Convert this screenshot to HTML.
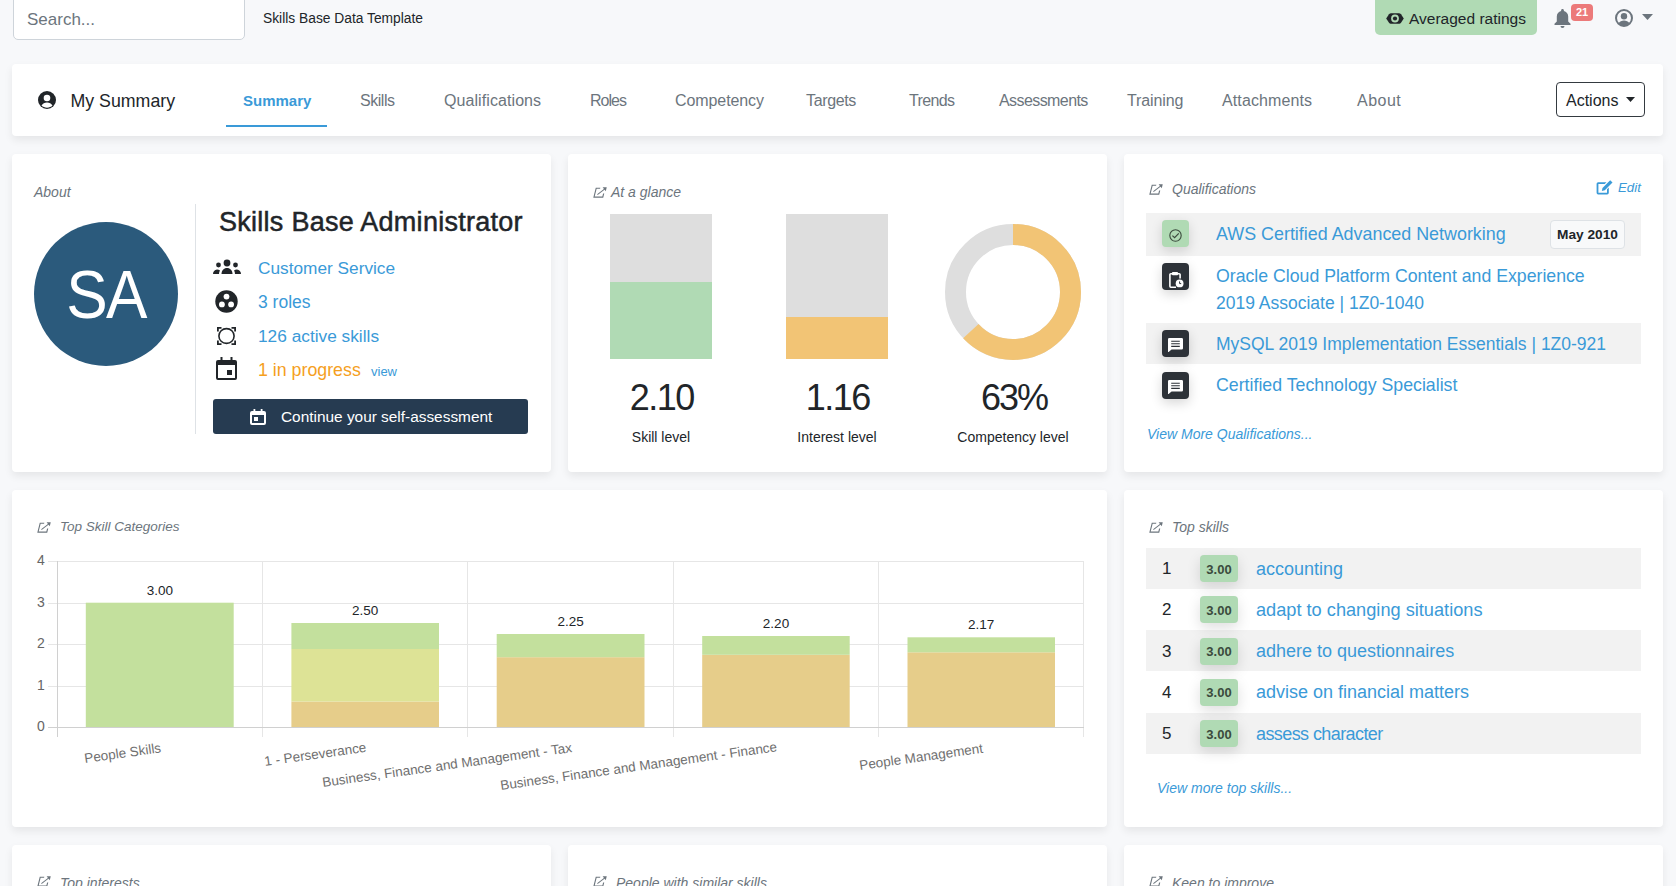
<!DOCTYPE html>
<html><head><meta charset="utf-8">
<style>
*{box-sizing:border-box;margin:0;padding:0}
html,body{width:1676px;height:886px;overflow:hidden}
body{background:#f7f8fa;font-family:"Liberation Sans",sans-serif;color:#212529;position:relative}
.a{position:absolute;white-space:nowrap;line-height:1}
.card{position:absolute;background:#fff;border-radius:4px;box-shadow:0 4px 9px rgba(0,0,0,.075)}
.lnk{color:#3a9ad8}
.hd{font-style:italic;font-size:14px;color:#6c757d}
.tab{font-size:16px;color:#6c757d}
</style></head><body>

<!-- top header -->
<div class="a" style="left:13px;top:-6px;width:232px;height:46px;background:#fff;border:1px solid #ced4da;border-radius:5px"></div>
<div class="a" style="left:27px;top:11px;font-size:17px;color:#6c757d">Search...</div>
<div class="a" style="left:263px;top:11.5px;font-size:13.8px;color:#212529">Skills Base Data Template</div>

<div class="a" style="left:1375px;top:-4px;width:162px;height:39px;background:#b0dab4;border-radius:5px"></div>
<svg class="a" style="left:1386px;top:13px" width="18" height="11" viewBox="0 0 18 11"><path d="M5.2 0.3h7.6c1 0 1.6.4 2.2 1L17.8 5.5l-2.8 4.2c-.6.6-1.2 1-2.2 1H5.2c-1 0-1.6-.4-2.2-1L.2 5.5 3 1.3C3.6.7 4.2.3 5.2.3z" fill="#212529"/><circle cx="9" cy="5.5" r="3.9" fill="#b0dab4"/><circle cx="9" cy="5.5" r="2.1" fill="#212529"/></svg>
<div class="a" style="left:1409px;top:10.5px;font-size:15.5px;color:#212529">Averaged ratings</div>

<svg class="a" style="left:1554px;top:9px" width="17" height="19" viewBox="0 0 17 19"><path d="M8.5 0c-.8 0-1.4.6-1.4 1.4v.6C4.6 2.6 2.8 4.8 2.8 7.4v5L.5 14.8V16h16v-1.2l-2.3-2.4v-5c0-2.6-1.8-4.8-4.3-5.4v-.6C9.9.6 9.3 0 8.5 0zM6.5 17a2 2 0 0 0 4 0z" fill="#6c757d"/></svg>
<div class="a" style="left:1571px;top:4px;width:22px;height:17px;background:#ec7a7a;border-radius:4px;color:#fff;font-size:11px;font-weight:bold;text-align:center;line-height:17px">21</div>
<svg class="a" style="left:1615px;top:9px" width="18" height="18" viewBox="0 0 18 18"><circle cx="9" cy="9" r="8" fill="#f7f8fa" stroke="#6c757d" stroke-width="2"/><circle cx="9" cy="7.2" r="3.2" fill="#6c757d"/><path d="M3.6 14.2c1.2-1.8 3.1-2.8 5.4-2.8s4.2 1 5.4 2.8c-1.3 1.5-3.3 2.3-5.4 2.3s-4.1-.8-5.4-2.3z" fill="#6c757d"/></svg>
<svg class="a" style="left:1642px;top:14px" width="11" height="6" viewBox="0 0 11 6"><path d="M0 0h11L5.5 6z" fill="#6c757d"/></svg>

<!-- nav card -->
<div class="card" style="left:12px;top:64px;width:1651px;height:72px"></div>
<svg class="a" style="left:38px;top:91px" width="18" height="18" viewBox="0 0 18 18"><circle cx="9" cy="9" r="9" fill="#212529"/><circle cx="9" cy="7" r="3.3" fill="#fff"/><path d="M3.5 14.5c1.2-2 3.2-3 5.5-3s4.3 1 5.5 3c-1.4 1.4-3.4 2.2-5.5 2.2s-4.1-.8-5.5-2.2z" fill="#fff"/></svg>
<div class="a" style="left:70.5px;top:93px;font-size:17.75px;color:#212529">My Summary</div>
<div class="a tab" style="left:243px;top:93px;font-size:15px;font-weight:bold;color:#3a9ad8">Summary</div>
<div class="a" style="left:226px;top:125px;width:101px;height:2px;background:#3a9ad8"></div>
<div class="a tab" style="left:360px;top:93px;letter-spacing:-0.46px">Skills</div>
<div class="a tab" style="left:444px;top:93px;letter-spacing:0.08px">Qualifications</div>
<div class="a tab" style="left:590px;top:93px;letter-spacing:-0.97px">Roles</div>
<div class="a tab" style="left:675px;top:93px;letter-spacing:-0.09px">Competency</div>
<div class="a tab" style="left:806px;top:93px;letter-spacing:-0.35px">Targets</div>
<div class="a tab" style="left:909px;top:93px;letter-spacing:-0.64px">Trends</div>
<div class="a tab" style="left:999px;top:93px;letter-spacing:-0.58px">Assessments</div>
<div class="a tab" style="left:1127px;top:93px;letter-spacing:-0.10px">Training</div>
<div class="a tab" style="left:1222px;top:93px;letter-spacing:0.11px">Attachments</div>
<div class="a tab" style="left:1357px;top:93px;letter-spacing:0.48px">About</div>
<div class="a" style="left:1556px;top:82px;width:89px;height:35px;border:1px solid #343a40;border-radius:4px"></div>
<div class="a" style="left:1566px;top:93px;font-size:16px;color:#212529">Actions</div>
<svg class="a" style="left:1626px;top:97px" width="9" height="5" viewBox="0 0 9 5"><path d="M0 0h9L4.5 5z" fill="#212529"/></svg>

<!-- ROW 1 -->
<div class="card" style="left:12px;top:154px;width:539px;height:318px"></div>
<div class="card" style="left:568px;top:154px;width:539px;height:318px"></div>
<div class="card" style="left:1124px;top:154px;width:539px;height:318px"></div>


<!-- About card content -->
<div class="a hd" style="left:34px;top:185px">About</div>
<div class="a" style="left:34px;top:222px;width:144px;height:144px;border-radius:50%;background:#2b5a7c"></div>
<div class="a" style="left:34px;top:259.5px;width:144px;text-align:center;font-size:69px;color:#fff;letter-spacing:-2px;transform:scaleX(0.9);transform-origin:50% 0">SA</div>
<div class="a" style="left:195px;top:204px;width:1px;height:230px;background:#dee2e6"></div>
<div class="a" style="left:219px;top:209px;font-size:27px;letter-spacing:0.27px;-webkit-text-stroke:0.5px #212529;color:#212529">Skills Base Administrator</div>
<!-- icons -->
<svg class="a" style="left:213px;top:259px" width="28" height="16" viewBox="0 0 28 16"><circle cx="14" cy="4" r="3.4" fill="#212529"/><circle cx="5.5" cy="6" r="2.4" fill="#212529"/><circle cx="22.5" cy="6" r="2.4" fill="#212529"/><path d="M8.5 15c0-3.5 2.4-6 5.5-6s5.5 2.5 5.5 6z" fill="#212529"/><path d="M0 15c0-2.6 1.6-4.4 4-4.6c1.2 0 2.2.4 3 1.1c-.6 1-1 2.1-1 3.5z" fill="#212529"/><path d="M28 15c0-2.6-1.6-4.4-4-4.6c-1.2 0-2.2.4-3 1.1c.6 1 1 2.1 1 3.5z" fill="#212529"/></svg>
<svg class="a" style="left:215px;top:290px" width="23" height="23" viewBox="0 0 23 23"><circle cx="11.5" cy="11.5" r="11.2" fill="#212529"/><circle cx="11.5" cy="6.6" r="2.9" fill="#fff"/><circle cx="6.9" cy="14.4" r="2.9" fill="#fff"/><circle cx="16.1" cy="14.4" r="2.9" fill="#fff"/></svg>
<svg class="a" style="left:217px;top:327px" width="19" height="18" viewBox="0 0 19 18"><path d="M0.9 4.5V0.9h3.6M14.5 0.9h3.6v3.6M18.1 13.5v3.6h-3.6M4.5 17.1H0.9v-3.6" fill="none" stroke="#212529" stroke-width="1.8"/><ellipse cx="9.5" cy="9" rx="7.6" ry="7.4" fill="none" stroke="#212529" stroke-width="1.6"/></svg>
<svg class="a" style="left:216px;top:357px" width="21" height="23" viewBox="0 0 21 23"><path d="M4.5 0h2v3h8V0h2v3H19a2 2 0 0 1 2 2v16a2 2 0 0 1-2 2H2a2 2 0 0 1-2-2V5a2 2 0 0 1 2-2h2.5zM2 8v13h17V8z" fill="#212529"/><rect x="11" y="13" width="5" height="5" fill="#212529"/></svg>
<div class="a lnk" style="left:258px;top:260px;font-size:17.25px">Customer Service</div>
<div class="a lnk" style="left:258px;top:294px;font-size:17.5px">3 roles</div>
<div class="a lnk" style="left:258px;top:328px;font-size:17.3px">126 active skills</div>
<div class="a" style="left:258px;top:362px;font-size:17.8px;color:#f5a01e">1 in progress</div>
<div class="a lnk" style="left:371px;top:365px;font-size:13px">view</div>
<div class="a" style="left:213px;top:399px;width:315px;height:35px;background:#263b51;border-radius:3px"></div>
<svg class="a" style="left:250px;top:409px" width="16" height="16" viewBox="0 0 16 16"><path d="M3.5 0h1.8v2h5.4V0h1.8v2H14a2 2 0 0 1 2 2v10a2 2 0 0 1-2 2H2a2 2 0 0 1-2-2V4a2 2 0 0 1 2-2h1.5zM2 6v8h12V6z" fill="#fff"/><rect x="4" y="8" width="4" height="4" fill="#fff"/></svg>
<div class="a" style="left:281px;top:409px;font-size:15.4px;color:#fff">Continue your self-assessment</div>


<!-- At a glance -->
<svg class="a" style="left:593px;top:187px" width="14" height="11" viewBox="0 0 14 11"><g transform="skewX(-14) translate(2.5 0)"><path d="M5 1.2H1v8.9h8.8V6.5" fill="none" stroke="#6c757d" stroke-width="1.15"/><path d="M3.8 7.6L10.6 1.2" fill="none" stroke="#6c757d" stroke-width="1.15"/><path d="M7.2 0.3h4.1v3.9z" fill="#6c757d"/></g></svg>
<div class="a hd" style="left:611px;top:185px">At a glance</div>
<div class="a" style="left:610px;top:214px;width:102px;height:145px;background:#dedede"></div>
<div class="a" style="left:610px;top:282px;width:102px;height:77px;background:#b0dab4"></div>
<div class="a" style="left:786px;top:214px;width:102px;height:145px;background:#dedede"></div>
<div class="a" style="left:786px;top:317px;width:102px;height:42px;background:#f2c475"></div>
<svg class="a" style="left:945px;top:224px" width="136" height="136" viewBox="0 0 136 136">
<circle cx="68" cy="68" r="57.5" fill="none" stroke="#dedede" stroke-width="21"/>
<circle cx="68" cy="68" r="57.5" fill="none" stroke="#f2c475" stroke-width="21" stroke-dasharray="227.6 400" transform="rotate(-90 68 68)"/>
</svg>
<div class="a" style="left:561px;top:379.5px;width:200px;text-align:center;font-size:36px;letter-spacing:-1.5px;text-indent:1.5px">2.10</div>
<div class="a" style="left:737px;top:379.5px;width:200px;text-align:center;font-size:36px;letter-spacing:-1.5px;text-indent:1.5px">1.16</div>
<div class="a" style="left:913px;top:379.5px;width:200px;text-align:center;font-size:36px;letter-spacing:-2px;text-indent:2px">63%</div>
<div class="a" style="left:561px;top:430px;width:200px;text-align:center;font-size:14px">Skill level</div>
<div class="a" style="left:737px;top:430px;width:200px;text-align:center;font-size:14px">Interest level</div>
<div class="a" style="left:913px;top:430px;width:200px;text-align:center;font-size:14px">Competency level</div>

<!-- Qualifications -->
<svg class="a" style="left:1149px;top:184px" width="14" height="11" viewBox="0 0 14 11"><g transform="skewX(-14) translate(2.5 0)"><path d="M5 1.2H1v8.9h8.8V6.5" fill="none" stroke="#6c757d" stroke-width="1.15"/><path d="M3.8 7.6L10.6 1.2" fill="none" stroke="#6c757d" stroke-width="1.15"/><path d="M7.2 0.3h4.1v3.9z" fill="#6c757d"/></g></svg>
<div class="a hd" style="left:1172px;top:182px">Qualifications</div>
<svg class="a" style="left:1596px;top:180px" width="17" height="15" viewBox="0 0 17 15"><path d="M10.5 2.2H2.2a1.6 1.6 0 0 0-1.6 1.6v9a1.6 1.6 0 0 0 1.6 1.6h9a1.6 1.6 0 0 0 1.6-1.6V7.5l-1.8 1.8v3.4H2.4V4h6.3z" fill="#3a9ad8"/><path d="M14.2.3l2.3 2.3-7.7 7.7-3 .7.7-3z" fill="#3a9ad8"/></svg>
<div class="a" style="left:1618px;top:181px;font-size:13.3px;font-style:italic;color:#3a9ad8">Edit</div>
<div class="a" style="left:1146px;top:213px;width:495px;height:43px;background:#f2f2f2"></div>
<div class="a" style="left:1146px;top:323px;width:495px;height:41px;background:#f2f2f2"></div>
<div class="a" style="left:1162px;top:220px;width:27px;height:27px;border-radius:4px;background:#b0dab4;box-shadow:0 4px 12px rgba(0,0,0,.14)"></div>
<svg class="a" style="left:1169px;top:229px" width="13" height="13" viewBox="0 0 13 13"><circle cx="6.5" cy="6.5" r="5.7" fill="none" stroke="#3b4a3d" stroke-width="1.1"/><path d="M3.4 6.6l2.2 2.1 4.2-4.4" fill="none" stroke="#3b4a3d" stroke-width="1.2"/></svg>
<div class="a" style="left:1162px;top:263px;width:27px;height:27px;border-radius:4px;background:#2d3238;box-shadow:0 4px 12px rgba(0,0,0,.16)"></div>
<svg class="a" style="left:1169px;top:271px" width="15" height="17" viewBox="0 0 15 17"><path d="M3.2 2.8H1.8a.9.9 0 0 0-.9.9v11.6a.9.9 0 0 0 .9.9h5.2M8.8 2.8h1.4a.9.9 0 0 1 .9.9v3.8" fill="none" stroke="#fff" stroke-width="1.6"/><rect x="3" y="1" width="6" height="3.2" rx=".8" fill="#fff"/><circle cx="10.6" cy="12.4" r="3.9" fill="#fff"/><path d="M10.6 10.4v2.2h1.6" fill="none" stroke="#2d3238" stroke-width="1"/></svg>
<div class="a" style="left:1162px;top:330px;width:27px;height:27px;border-radius:4px;background:#2d3238;box-shadow:0 4px 12px rgba(0,0,0,.16)"></div>
<svg class="a" style="left:1168px;top:338px" width="15" height="14" viewBox="0 0 15 14"><path d="M1.3 0h12.4A1.3 1.3 0 0 1 15 1.3v8.9a1.3 1.3 0 0 1-1.3 1.3H3.6L.6 14H0V1.3A1.3 1.3 0 0 1 1.3 0z" fill="#fff"/><path d="M3.2 3.2h8.6M3.2 5.8h8.6M3.2 8.4h8.6" stroke="#2d3238" stroke-width="1.1"/></svg>
<div class="a" style="left:1162px;top:372px;width:27px;height:27px;border-radius:4px;background:#2d3238;box-shadow:0 4px 12px rgba(0,0,0,.16)"></div>
<svg class="a" style="left:1168px;top:380px" width="15" height="14" viewBox="0 0 15 14"><path d="M1.3 0h12.4A1.3 1.3 0 0 1 15 1.3v8.9a1.3 1.3 0 0 1-1.3 1.3H3.6L.6 14H0V1.3A1.3 1.3 0 0 1 1.3 0z" fill="#fff"/><path d="M3.2 3.2h8.6M3.2 5.8h8.6M3.2 8.4h8.6" stroke="#2d3238" stroke-width="1.1"/></svg>
<div class="a lnk" style="left:1216px;top:225.8px;font-size:17.9px">AWS Certified Advanced Networking</div>
<div class="a" style="left:1550px;top:220px;width:75px;height:29px;background:#f8f9fa;border:1px solid #dee2e6;border-radius:4px;font-size:13.7px;font-weight:bold;text-align:center;line-height:28px;color:#212529">May 2010</div>
<div class="a lnk" style="left:1216px;top:267.82px;font-size:17.7px">Oracle Cloud Platform Content and Experience</div>
<div class="a lnk" style="left:1216px;top:294.79px;font-size:17.5px">2019 Associate | 1Z0-1040</div>
<div class="a lnk" style="left:1216px;top:336.19px;font-size:17.5px">MySQL 2019 Implementation Essentials | 1Z0-921</div>
<div class="a lnk" style="left:1216px;top:376.67px;font-size:17.76px">Certified Technology Specialist</div>
<div class="a" style="left:1147px;top:427px;font-size:14px;font-style:italic;color:#3a9ad8">View More Qualifications...</div>

<!-- ROW 2 -->
<div class="card" style="left:12px;top:490px;width:1095px;height:337px"></div>
<div class="card" style="left:1124px;top:490px;width:539px;height:337px"></div>


<!-- chart -->
<svg class="a" style="left:37px;top:522px" width="14" height="11" viewBox="0 0 14 11"><g transform="skewX(-14) translate(2.5 0)"><path d="M5 1.2H1v8.9h8.8V6.5" fill="none" stroke="#6c757d" stroke-width="1.15"/><path d="M3.8 7.6L10.6 1.2" fill="none" stroke="#6c757d" stroke-width="1.15"/><path d="M7.2 0.3h4.1v3.9z" fill="#6c757d"/></g></svg>
<div class="a hd" style="left:60px;top:520px;font-size:13.5px">Top Skill Categories</div>
<svg class="a" style="left:0;top:480px" width="1110" height="340" viewBox="0 480 1110 340">
<line x1="48" y1="727.5" x2="1084" y2="727.5" stroke="#e6e6e6" stroke-width="1"/>
<line x1="48" y1="686.5" x2="1084" y2="686.5" stroke="#e6e6e6" stroke-width="1"/>
<line x1="48" y1="644.5" x2="1084" y2="644.5" stroke="#e6e6e6" stroke-width="1"/>
<line x1="48" y1="603.5" x2="1084" y2="603.5" stroke="#e6e6e6" stroke-width="1"/>
<line x1="48" y1="561.5" x2="1084" y2="561.5" stroke="#e6e6e6" stroke-width="1"/>
<line x1="57.5" y1="561" x2="57.5" y2="737" stroke="#e6e6e6" stroke-width="1"/>
<line x1="262.5" y1="561" x2="262.5" y2="737" stroke="#e6e6e6" stroke-width="1"/>
<line x1="467.5" y1="561" x2="467.5" y2="737" stroke="#e6e6e6" stroke-width="1"/>
<line x1="673.5" y1="561" x2="673.5" y2="737" stroke="#e6e6e6" stroke-width="1"/>
<line x1="878.5" y1="561" x2="878.5" y2="737" stroke="#e6e6e6" stroke-width="1"/>
<line x1="1083.5" y1="561" x2="1083.5" y2="737" stroke="#e6e6e6" stroke-width="1"/>
<line x1="48" y1="727.5" x2="1084" y2="727.5" stroke="#d0d0d0" stroke-width="1"/>
<line x1="57.5" y1="561" x2="57.5" y2="737" stroke="#d0d0d0" stroke-width="1"/>
<text x="41" y="731.0" font-size="14" fill="#666" text-anchor="middle" font-family="Liberation Sans">0</text>
<text x="41" y="689.5" font-size="14" fill="#666" text-anchor="middle" font-family="Liberation Sans">1</text>
<text x="41" y="648.0" font-size="14" fill="#666" text-anchor="middle" font-family="Liberation Sans">2</text>
<text x="41" y="606.5" font-size="14" fill="#666" text-anchor="middle" font-family="Liberation Sans">3</text>
<text x="41" y="565.0" font-size="14" fill="#666" text-anchor="middle" font-family="Liberation Sans">4</text>
<rect x="85.8" y="602.7" width="147.9" height="124.3" fill="#c3e09d"/>
<text x="159.8" y="594.7" font-size="13.5" fill="#212529" text-anchor="middle" font-family="Liberation Sans">3.00</text>
<rect x="291.4" y="701.5" width="147.6" height="25.5" fill="#e6cd8a"/>
<rect x="291.4" y="649.0" width="147.6" height="52.5" fill="#dde396"/>
<rect x="291.4" y="623.0" width="147.6" height="26.0" fill="#c3e09d"/>
<text x="365.2" y="615.0" font-size="13.5" fill="#212529" text-anchor="middle" font-family="Liberation Sans">2.50</text>
<rect x="496.7" y="657.2" width="147.8" height="69.8" fill="#e6cd8a"/>
<rect x="496.7" y="634.0" width="147.8" height="23.2" fill="#c3e09d"/>
<text x="570.6" y="626.0" font-size="13.5" fill="#212529" text-anchor="middle" font-family="Liberation Sans">2.25</text>
<rect x="702.2" y="654.8" width="147.5" height="72.2" fill="#e6cd8a"/>
<rect x="702.2" y="636.0" width="147.5" height="18.8" fill="#c3e09d"/>
<text x="776.0" y="628.0" font-size="13.5" fill="#212529" text-anchor="middle" font-family="Liberation Sans">2.20</text>
<rect x="907.5" y="652.3" width="147.5" height="74.7" fill="#e6cd8a"/>
<rect x="907.5" y="637.3" width="147.5" height="15.0" fill="#c3e09d"/>
<text x="981.2" y="629.3" font-size="13.5" fill="#212529" text-anchor="middle" font-family="Liberation Sans">2.17</text>
<text x="85" y="763" font-size="13.5" fill="#707070" font-family="Liberation Sans" transform="rotate(-8 85 763)">People Skills</text>
<text x="265" y="766" font-size="13.5" fill="#707070" font-family="Liberation Sans" transform="rotate(-8 265 766)">1 - Perseverance</text>
<text x="323" y="787" font-size="13.5" fill="#707070" font-family="Liberation Sans" transform="rotate(-8 323 787)">Business, Finance and Management - Tax</text>
<text x="501" y="790" font-size="13.5" fill="#707070" font-family="Liberation Sans" transform="rotate(-8 501 790)">Business, Finance and Management - Finance</text>
<text x="860" y="770" font-size="13.5" fill="#707070" font-family="Liberation Sans" transform="rotate(-8 860 770)">People Management</text>
</svg>

<!-- top skills -->
<svg class="a" style="left:1149px;top:522px" width="14" height="11" viewBox="0 0 14 11"><g transform="skewX(-14) translate(2.5 0)"><path d="M5 1.2H1v8.9h8.8V6.5" fill="none" stroke="#6c757d" stroke-width="1.15"/><path d="M3.8 7.6L10.6 1.2" fill="none" stroke="#6c757d" stroke-width="1.15"/><path d="M7.2 0.3h4.1v3.9z" fill="#6c757d"/></g></svg>
<div class="a hd" style="left:1172px;top:520px">Top skills</div>
<div class="a" style="left:1146px;top:548px;width:495px;height:41px;background:#f2f2f2"></div>
<div class="a" style="left:1146px;top:630px;width:495px;height:41px;background:#f2f2f2"></div>
<div class="a" style="left:1146px;top:713px;width:495px;height:41px;background:#f2f2f2"></div>
<div class="a" style="left:1162px;top:560.00px;font-size:17px;color:#212529">1</div>
<div class="a" style="left:1200px;top:555.00px;width:38px;height:27px;border-radius:4px;background:#b0dab4;box-shadow:0 5px 14px rgba(0,0,0,.13)"></div>
<div class="a" style="left:1200px;top:562.70px;width:38px;font-size:13px;font-weight:bold;color:#3b4a3d;text-align:center">3.00</div>
<div class="a lnk" style="left:1256px;top:559.50px;font-size:18px">accounting</div>
<div class="a" style="left:1162px;top:601.25px;font-size:17px;color:#212529">2</div>
<div class="a" style="left:1200px;top:596.25px;width:38px;height:27px;border-radius:4px;background:#b0dab4;box-shadow:0 5px 14px rgba(0,0,0,.13)"></div>
<div class="a" style="left:1200px;top:603.95px;width:38px;font-size:13px;font-weight:bold;color:#3b4a3d;text-align:center">3.00</div>
<div class="a lnk" style="left:1256px;top:600.75px;font-size:18.2px">adapt to changing situations</div>
<div class="a" style="left:1162px;top:642.50px;font-size:17px;color:#212529">3</div>
<div class="a" style="left:1200px;top:637.50px;width:38px;height:27px;border-radius:4px;background:#b0dab4;box-shadow:0 5px 14px rgba(0,0,0,.13)"></div>
<div class="a" style="left:1200px;top:645.20px;width:38px;font-size:13px;font-weight:bold;color:#3b4a3d;text-align:center">3.00</div>
<div class="a lnk" style="left:1256px;top:642.00px;font-size:18px">adhere to questionnaires</div>
<div class="a" style="left:1162px;top:683.75px;font-size:17px;color:#212529">4</div>
<div class="a" style="left:1200px;top:678.75px;width:38px;height:27px;border-radius:4px;background:#b0dab4;box-shadow:0 5px 14px rgba(0,0,0,.13)"></div>
<div class="a" style="left:1200px;top:686.45px;width:38px;font-size:13px;font-weight:bold;color:#3b4a3d;text-align:center">3.00</div>
<div class="a lnk" style="left:1256px;top:683.25px;font-size:18px">advise on financial matters</div>
<div class="a" style="left:1162px;top:725.00px;font-size:17px;color:#212529">5</div>
<div class="a" style="left:1200px;top:720.00px;width:38px;height:27px;border-radius:4px;background:#b0dab4;box-shadow:0 5px 14px rgba(0,0,0,.13)"></div>
<div class="a" style="left:1200px;top:727.70px;width:38px;font-size:13px;font-weight:bold;color:#3b4a3d;text-align:center">3.00</div>
<div class="a lnk" style="left:1256px;top:724.50px;font-size:18px;letter-spacing:-0.59px">assess character</div>
<div class="a" style="left:1157px;top:781px;font-size:14px;font-style:italic;color:#3a9ad8">View more top skills...</div>

<!-- ROW 3 -->
<div class="card" style="left:12px;top:845px;width:539px;height:100px"></div>
<div class="card" style="left:568px;top:845px;width:539px;height:100px"></div>
<div class="card" style="left:1124px;top:845px;width:539px;height:100px"></div>


<svg class="a" style="left:37px;top:876px" width="14" height="11" viewBox="0 0 14 11"><g transform="skewX(-14) translate(2.5 0)"><path d="M5 1.2H1v8.9h8.8V6.5" fill="none" stroke="#6c757d" stroke-width="1.15"/><path d="M3.8 7.6L10.6 1.2" fill="none" stroke="#6c757d" stroke-width="1.15"/><path d="M7.2 0.3h4.1v3.9z" fill="#6c757d"/></g></svg>
<div class="a hd" style="left:60px;top:876px">Top interests</div>
<svg class="a" style="left:593px;top:876px" width="14" height="11" viewBox="0 0 14 11"><g transform="skewX(-14) translate(2.5 0)"><path d="M5 1.2H1v8.9h8.8V6.5" fill="none" stroke="#6c757d" stroke-width="1.15"/><path d="M3.8 7.6L10.6 1.2" fill="none" stroke="#6c757d" stroke-width="1.15"/><path d="M7.2 0.3h4.1v3.9z" fill="#6c757d"/></g></svg>
<div class="a hd" style="left:616px;top:876px">People with similar skills</div>
<svg class="a" style="left:1149px;top:876px" width="14" height="11" viewBox="0 0 14 11"><g transform="skewX(-14) translate(2.5 0)"><path d="M5 1.2H1v8.9h8.8V6.5" fill="none" stroke="#6c757d" stroke-width="1.15"/><path d="M3.8 7.6L10.6 1.2" fill="none" stroke="#6c757d" stroke-width="1.15"/><path d="M7.2 0.3h4.1v3.9z" fill="#6c757d"/></g></svg>
<div class="a hd" style="left:1172px;top:876px">Keen to improve</div>
</body></html>
